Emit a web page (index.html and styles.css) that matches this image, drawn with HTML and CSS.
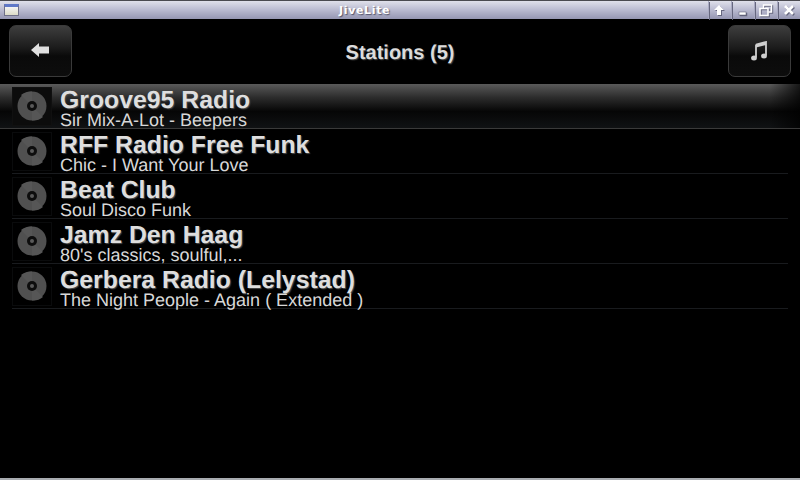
FILE: index.html
```html
<!DOCTYPE html>
<html>
<head>
<meta charset="utf-8">
<title>JiveLite</title>
<link rel="stylesheet" href="styles.css">
</head>
<body>
<div class="window">
  <div class="titlebar">
    <div class="win-menu"></div>
    <div class="win-title">JiveLite</div>
    <div class="win-btns">
      <div class="win-btn"><svg class="up-icon" width="12" height="12" viewBox="0 0 12 12"><path d="M6 1 L11 6 H8 V11 H4 V6 H1 Z" fill="#fff"/></svg></div>
      <div class="win-btn"><svg width="12" height="12" viewBox="0 0 12 12"><rect x="2" y="8" width="7" height="3" fill="#fff" stroke="#55566e" stroke-width=".5"/></svg></div>
      <div class="win-btn"><svg width="14" height="13" viewBox="0 0 14 13"><path d="M4.5 4 V1 H12.5 V8 H9.5" fill="none" stroke="#fff" stroke-width="1.4"/><rect x="1" y="4.5" width="8" height="7" fill="none" stroke="#fff" stroke-width="1.6"/></svg></div>
      <div class="win-btn"><svg width="12" height="12" viewBox="0 0 12 12"><path d="M2 2 L10 10 M10 2 L2 10" stroke="#fff" stroke-width="2.6"/></svg></div>
    </div>
  </div>
  <header class="topbar">
    <button class="tool-btn"><svg class="back-icon" width="18" height="14" viewBox="0 0 18 14"><path d="M0 7 L8 0 V3.5 H18 V10.5 H8 V14 Z" fill="#e0e0e0"/></svg></button>
    <h1 class="page-title">Stations (5)</h1>
    <button class="tool-btn"><svg class="note-icon" width="16" height="20" viewBox="0 0 16 20"><path d="M5 3.5 L15 1 V14.5 M5 3.5 V16.5" fill="none" stroke="#cfcfcf" stroke-width="1.8"/><path d="M5 3.5 L15 1 V4 L5 6.5 Z" fill="#cfcfcf"/><ellipse cx="3" cy="17" rx="2.9" ry="2.5" fill="#cfcfcf"/><ellipse cx="13" cy="15" rx="2.9" ry="2.5" fill="#cfcfcf"/></svg></button>
  </header>
  <ul class="list">
    <li class="row selected">
      <div class="thumb"><svg class="disc" viewBox="0 0 30 30"><circle cx="15" cy="15" r="14.5" fill="#505050"/><path d="M15 15 L4 4 A15 15 0 0 1 15 0.5 Z M15 15 L26 26 A15 15 0 0 1 15 29.5 Z" fill="#565656"/><circle cx="15" cy="15" r="5" fill="#0d0d0d"/><circle cx="15" cy="15" r="2" fill="#5a5a5a"/></svg></div>
      <div class="text"><div class="name">Groove95 Radio</div><div class="sub">Sir Mix-A-Lot - Beepers</div></div>
    </li>
    <li class="row">
      <div class="thumb"><svg class="disc" viewBox="0 0 30 30"><circle cx="15" cy="15" r="14.5" fill="#505050"/><path d="M15 15 L4 4 A15 15 0 0 1 15 0.5 Z M15 15 L26 26 A15 15 0 0 1 15 29.5 Z" fill="#565656"/><circle cx="15" cy="15" r="5" fill="#0d0d0d"/><circle cx="15" cy="15" r="2" fill="#5a5a5a"/></svg></div>
      <div class="text"><div class="name">RFF Radio Free Funk</div><div class="sub">Chic - I Want Your Love</div></div>
    </li>
    <li class="row">
      <div class="thumb"><svg class="disc" viewBox="0 0 30 30"><circle cx="15" cy="15" r="14.5" fill="#505050"/><path d="M15 15 L4 4 A15 15 0 0 1 15 0.5 Z M15 15 L26 26 A15 15 0 0 1 15 29.5 Z" fill="#565656"/><circle cx="15" cy="15" r="5" fill="#0d0d0d"/><circle cx="15" cy="15" r="2" fill="#5a5a5a"/></svg></div>
      <div class="text"><div class="name">Beat Club</div><div class="sub">Soul Disco Funk</div></div>
    </li>
    <li class="row">
      <div class="thumb"><svg class="disc" viewBox="0 0 30 30"><circle cx="15" cy="15" r="14.5" fill="#505050"/><path d="M15 15 L4 4 A15 15 0 0 1 15 0.5 Z M15 15 L26 26 A15 15 0 0 1 15 29.5 Z" fill="#565656"/><circle cx="15" cy="15" r="5" fill="#0d0d0d"/><circle cx="15" cy="15" r="2" fill="#5a5a5a"/></svg></div>
      <div class="text"><div class="name">Jamz Den Haag</div><div class="sub">80's classics, soulful,...</div></div>
    </li>
    <li class="row">
      <div class="thumb"><svg class="disc" viewBox="0 0 30 30"><circle cx="15" cy="15" r="14.5" fill="#505050"/><path d="M15 15 L4 4 A15 15 0 0 1 15 0.5 Z M15 15 L26 26 A15 15 0 0 1 15 29.5 Z" fill="#565656"/><circle cx="15" cy="15" r="5" fill="#0d0d0d"/><circle cx="15" cy="15" r="2" fill="#5a5a5a"/></svg></div>
      <div class="text"><div class="name">Gerbera Radio (Lelystad)</div><div class="sub">The Night People - Again ( Extended )</div></div>
    </li>
  </ul>
  <div class="bottom-edge"></div>
</div>
</body>
</html>
```
FILE: styles.css
```css
* { box-sizing: border-box; }
html, body { margin: 0; padding: 0; background: #000; }
.window {
  width: 800px;
  height: 480px;
  display: flex;
  flex-direction: column;
  overflow: hidden;
  background: #000;
  font-family: "Liberation Sans", Arial, sans-serif;
  text-rendering: geometricPrecision;
}
.titlebar {
  height: 19px;
  flex: none;
  display: flex;
  align-items: center;
  position: relative;
  border-top: 1px solid #4a4a50;
  background: linear-gradient(#dfe0ea, #b9bad0 50%, #9596b2);
}
.win-menu {
  width: 15px;
  height: 12px;
  margin-left: 4px;
  border: 1px solid #6f7088;
  border-top: 3px solid #5f78c8;
  background: linear-gradient(#f4f4f4, #dcdcc8);
}
.win-title {
  position: absolute;
  left: 339px;
  top: 3px;
  font-family: "DejaVu Sans", sans-serif;
  font-size: 11px;
  font-weight: bold;
  line-height: 14px;
  letter-spacing: 0.65px;
  color: #fff;
  text-shadow: 1px 1px 1px #55566e;
}
.win-btns { margin-left: auto; display: flex; height: 100%; }
.win-btn {
  width: 23px;
  display: flex;
  align-items: center;
  justify-content: center;
  border-left: 1px solid #a9aac2;
  filter: drop-shadow(1px 1px 0 #66677f);
}
.up-icon { position: relative; left: -1px; }
.topbar {
  height: 65px;
  flex: none;
  display: flex;
  align-items: center;
  justify-content: space-between;
  padding: 0 9px 2px 9px;
}
.tool-btn {
  width: 63px;
  height: 52px;
  padding: 0;
  display: flex;
  align-items: center;
  justify-content: center;
  border: 1px solid #3a3a3a;
  border-radius: 7px;
  background: linear-gradient(#3e3e3e, #1a1a1a 45%, #0a0a0a 60%, #0d0d0d);
}
.back-icon { position: relative; left: -1px; top: -1px; }
.note-icon { position: relative; left: -1px; }
.page-title {
  margin: 0;
  font-size: 20px;
  font-weight: bold;
  color: #dcdcdc;
  text-shadow: 1px 1px 1px #444;
  position: relative;
  top: 3px;
}
.list { list-style: none; margin: 0; padding: 0; }
.row {
  height: 45px;
  display: flex;
  align-items: center;
  margin: 0 12px;
  border-bottom: 1px solid #191b1e;
}
.row.selected {
  margin: 0;
  padding-left: 12px;
  border-bottom-color: #3a3a3a;
  background:
    linear-gradient(to left, rgba(0,0,0,.75), rgba(0,0,0,0) 30px),
    linear-gradient(#5a5a5a, #2d2d2d 30%, #060606 62%, #101214);
}
.thumb {
  width: 40px;
  height: 39px;
  flex: none;
  display: flex;
  align-items: center;
  justify-content: center;
  border: 1px solid #0a0b0c;
  background: #000;
}
.selected .thumb { background: #0c0c0c; border-color: #101010; }
.disc { width: 30px; height: 30px; display: block; }
.text { margin-left: 8px; min-width: 0; padding-top: 3px; }
.name {
  font-size: 24.8px;
  font-weight: bold;
  line-height: 25px;
  color: #dedede;
  text-shadow: 1px 1px 1px #4a4a4a;
  white-space: nowrap;
}
.sub {
  font-size: 18px;
  line-height: 15px;
  color: #d8d8d8;
  white-space: nowrap;
}
.bottom-edge {
  margin-top: auto;
  height: 2px;
  flex: none;
  background: #a8acb0;
}
```
